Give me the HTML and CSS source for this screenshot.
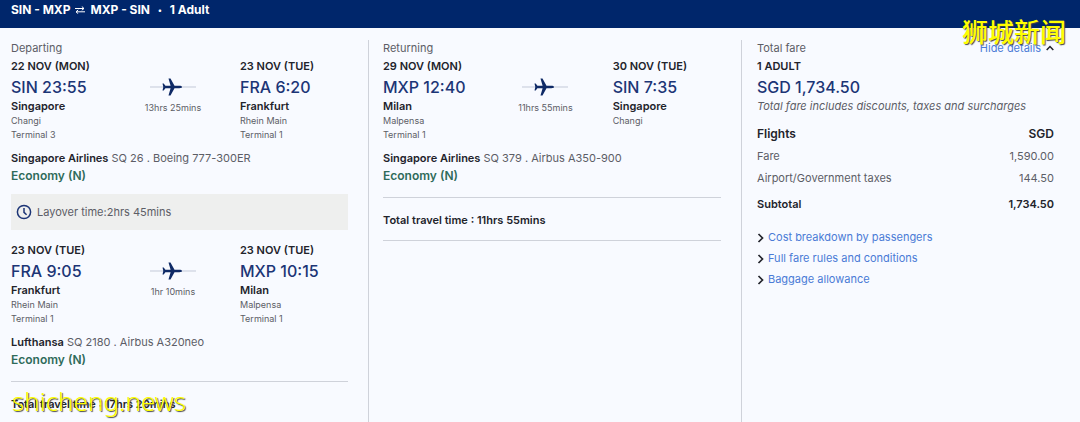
FILE: index.html
```html
<!DOCTYPE html>
<html lang="en">
<head>
<meta charset="utf-8">
<meta name="viewport" content="width=device-width, initial-scale=1">
<title>Fare summary</title>
<link rel="stylesheet" href="styles.css">
</head>
<body>
<svg class="defs" width="0" height="0" aria-hidden="true">
  <symbol id="plane" viewBox="0 0 46 18">
    <path d="M0 9H46" stroke="#c3c9d8" stroke-width="1"/>
    <path d="M32 9c0 .8-1.200 1.200-2.700 1.200h-4.800L20.500 17.500h-2L20.600 10.200h-5.200L13.700 12.400h-1.200L13.300 9 12.500 5.600h1.200l1.700 2.200h5.200L18.500.5h2l4 7.300h4.800c1.500 0 2.700.4 2.700 1.200z" fill="#0f2a66"/>
  </symbol>
</svg>
<header class="topbar">
  <h1 class="route"><span>SIN - MXP</span>
    <svg class="swap" viewBox="0 0 10 8" role="img" aria-label="return"><path d="M0 2.500H9M6.800 .5L9 2.500 6.800 4.200M10 5.800H1M3.200 3.900L1 5.800 3.200 7.700" fill="none" stroke="#fff"/></svg>
    <span>MXP - SIN</span> <span class="dot">•</span> <span>1 Adult</span></h1>
</header>
<main class="columns">
  <section class="column column-first">
    <h2 class="label">Departing</h2>
    <div class="flight">
      <div>
        <p class="date">22 NOV (MON)</p>
        <p class="time">SIN 23:55</p>
        <p class="city">Singapore</p>
        <p class="place">Changi</p>
        <p class="place">Terminal 3</p>
      </div>
      <div class="duration"><svg class="plane"><use href="#plane"/></svg><span>13hrs 25mins</span></div>
      <div>
        <p class="date">23 NOV (TUE)</p>
        <p class="time">FRA 6:20</p>
        <p class="city">Frankfurt</p>
        <p class="place">Rhein Main</p>
        <p class="place">Terminal 1</p>
      </div>
    </div>
    <p class="carrier"><strong>Singapore Airlines</strong> SQ 26 . Boeing 777-300ER</p>
    <p class="cabin">Economy (N)</p>
    <div class="layover">
      <svg class="clock" viewBox="0 0 16 16"><circle cx="8" cy="8" r="6.600"/><path d="M8 4v4.300l2.600 2.400"/></svg>
      <span>Layover time:2hrs 45mins</span>
    </div>
    <div class="flight">
      <div>
        <p class="date">23 NOV (TUE)</p>
        <p class="time">FRA 9:05</p>
        <p class="city">Frankfurt</p>
        <p class="place">Rhein Main</p>
        <p class="place">Terminal 1</p>
      </div>
      <div class="duration"><svg class="plane"><use href="#plane"/></svg><span>1hr 10mins</span></div>
      <div>
        <p class="date">23 NOV (TUE)</p>
        <p class="time">MXP 10:15</p>
        <p class="city">Milan</p>
        <p class="place">Malpensa</p>
        <p class="place">Terminal 1</p>
      </div>
    </div>
    <p class="carrier"><strong>Lufthansa</strong> SQ 2180 . Airbus A320neo</p>
    <p class="cabin">Economy (N)</p>
    <p class="total">Total travel time : 17hrs 20mins</p>
  </section>

  <section class="column">
    <h2 class="label">Returning</h2>
    <div class="flight">
      <div>
        <p class="date">29 NOV (MON)</p>
        <p class="time">MXP 12:40</p>
        <p class="city">Milan</p>
        <p class="place">Malpensa</p>
        <p class="place">Terminal 1</p>
      </div>
      <div class="duration"><svg class="plane"><use href="#plane"/></svg><span>11hrs 55mins</span></div>
      <div>
        <p class="date">30 NOV (TUE)</p>
        <p class="time">SIN 7:35</p>
        <p class="city">Singapore</p>
        <p class="place">Changi</p>
      </div>
    </div>
    <p class="carrier"><strong>Singapore Airlines</strong> SQ 379 . Airbus A350-900</p>
    <p class="cabin">Economy (N)</p>
    <p class="total total-closed">Total travel time : 11hrs 55mins</p>
  </section>

  <section class="column column-fare">
    <div class="fare-head">
      <h2 class="label">Total fare</h2>
      <button class="toggle" type="button">Hide details
        <svg class="caret" viewBox="0 0 8 6"><path d="M.7 5L4 1.500 7.300 5"/></svg></button>
    </div>
    <p class="date">1 ADULT</p>
    <p class="time">SGD 1,734.50</p>
    <p class="note">Total fare includes discounts, taxes and surcharges</p>
    <table class="fares">
      <thead><tr><th scope="col">Flights</th><th scope="col">SGD</th></tr></thead>
      <tbody>
        <tr><td>Fare</td><td>1,590.00</td></tr>
        <tr><td>Airport/Government taxes</td><td>144.50</td></tr>
      </tbody>
      <tfoot><tr><th scope="row">Subtotal</th><td>1,734.50</td></tr></tfoot>
    </table>
    <ul class="links">
      <li><svg class="chevron" viewBox="0 0 7 10"><path d="M1.500 1L5.500 5 1.500 9"/></svg><a href="#costs">Cost breakdown by passengers</a></li>
      <li><svg class="chevron" viewBox="0 0 7 10"><path d="M1.500 1L5.500 5 1.500 9"/></svg><a href="#rules">Full fare rules and conditions</a></li>
      <li><svg class="chevron" viewBox="0 0 7 10"><path d="M1.500 1L5.500 5 1.500 9"/></svg><a href="#baggage">Baggage allowance</a></li>
    </ul>
  </section>
</main>
<div class="mark mark-top" lang="zh">狮城新闻</div>
<div class="mark mark-bottom">shicheng.news</div>
</body>
</html>
```
FILE: styles.css
```css
* { box-sizing: border-box; }

body {
  margin: 0;
  min-height: 100vh;
  position: relative;
  display: flex;
  flex-direction: column;
  background: #f8faff;
  color: #5c5d66;
  font: 11px/16px Inter, "Liberation Sans", sans-serif;
}

h1, h2, p, ul { margin: 0; padding: 0; }

.defs { position: absolute; }

.topbar {
  background: #00266b;
  color: #fff;
  padding: 2px 11px 10px;
}

.route {
  display: flex;
  align-items: center;
  gap: 5px;
  font-size: 12px;
  line-height: 16px;
  font-weight: 700;
}
.swap { width: 10px; height: 8px; }
.dot { margin: 0 3px; font-size: 8px; }

.columns {
  flex: 1;
  display: grid;
  grid-template-columns: 368fr 373fr 339fr;
  padding-top: 12px;
}

.column {
  border-left: 1px solid #cfd2da;
  padding: 0 20px 0 14px;
}
.column-first { border-left: 0; padding-left: 11px; }
.column-fare { padding-left: 15px; padding-right: 26px; }

.label { font-size: 11px; line-height: 16px; font-weight: 400; }

.flight {
  display: grid;
  grid-template-columns: 95fr 134fr 108fr;
}

.date { font-size: 11px; line-height: 20px; font-weight: 600; color: #22232b; }
.time { font-size: 16px; line-height: 22px; font-weight: 500; color: #1c3576; }
.city { font-weight: 600; color: #22232b; }
.place { font-size: 9px; line-height: 14px; }

.duration {
  display: flex;
  flex-direction: column;
  align-items: center;
  padding-top: 22px;
  font-size: 9px;
  line-height: 14px;
}
.plane { width: 46px; height: 18px; margin-bottom: 5px; }

.carrier { margin-top: 8px; }
.carrier strong { font-weight: 600; color: #22232b; }
.cabin { font-size: 12px; line-height: 20px; font-weight: 600; color: #2f6b5a; }

.layover {
  display: flex;
  align-items: center;
  gap: 5px;
  margin: 8px 0 10px;
  padding: 10px 5px;
  background: #eeefee;
}
.clock { width: 16px; height: 16px; fill: none; stroke: #1c3576; stroke-width: 1.5; }

.total {
  margin-top: 11px;
  padding-top: 14px;
  border-top: 1px solid #cfd2da;
  font-weight: 600;
  color: #22232b;
}
.total-closed { padding-bottom: 12px; border-bottom: 1px solid #cfd2da; }

.fare-head { display: flex; justify-content: space-between; }
.toggle {
  display: flex;
  align-items: center;
  gap: 5px;
  border: 0;
  padding: 0;
  background: none;
  color: #4a7bd6;
  font: inherit;
}
.caret { width: 8px; height: 6px; fill: none; stroke: #22232b; stroke-width: 1.5; }
.note { font-style: italic; }

.fares { width: 100%; margin-top: 9px; border-collapse: collapse; }
.fares th, .fares td { height: 22px; padding: 0; text-align: left; font-weight: 400; }
.fares tr > :last-child { text-align: right; }
.fares thead th { font-size: 12px; font-weight: 600; color: #22232b; }
.fares tfoot th, .fares tfoot td { height: 30px; font-weight: 600; color: #22232b; }

.links { margin-top: 8px; list-style: none; line-height: 21px; }
.links li { display: flex; align-items: center; gap: 4px; }
.links a { color: #4a7bd6; text-decoration: none; }
.chevron { width: 7px; height: 10px; fill: none; stroke: #22232b; stroke-width: 1.7; }

.mark {
  position: absolute;
  color: #ffff00;
  text-shadow: 1px 1px 1px #444;
  pointer-events: none;
}
.mark-top {
  top: 15px;
  right: 14px;
  font: 500 26px/32px "Noto Sans CJK SC", sans-serif;
}
.mark-bottom {
  top: 385px;
  left: 12px;
  font: 300 26px/32px "Noto Sans", sans-serif;
}
```
